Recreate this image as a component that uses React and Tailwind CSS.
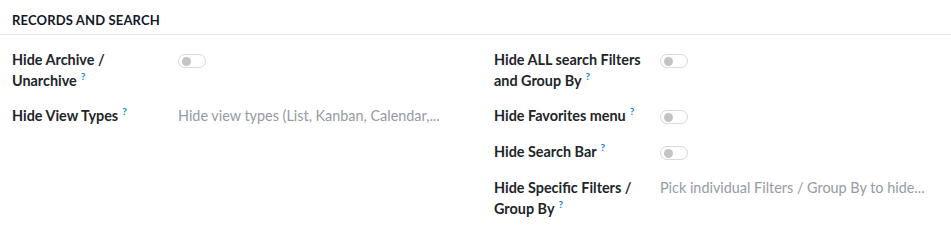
import React from "react";

function Help() {
  return (
    <span className="inline-block align-top ml-[4px] mt-[1px] text-[10px] leading-[10px] font-bold text-[#0b86c0]">?</span>
  );
}

function Toggle() {
  return (
    <div className="mt-[5px] w-[28px] h-[14px] rounded-full border border-[#d6d9dd] bg-white flex items-center pl-[3px] shrink-0">
      <div className="w-[9px] h-[9px] rounded-full bg-[#c2c4c7]" />
    </div>
  );
}

function Row({ label, help = true, children }) {
  return (
    <div className="flex">
      <div className="w-[152px] mr-[14px] font-bold text-[14.4px] leading-[21px] text-[#212529]">
        {label}
        {help && <Help />}
      </div>
      <div className="flex-1 min-w-0">{children}</div>
    </div>
  );
}

function Placeholder({ text }) {
  return (
    <div className="text-[14.4px] leading-[21px] text-[#959ba3] whitespace-nowrap overflow-hidden">{text}</div>
  );
}

export default function App() {
  return (
    <div className="w-[951px] h-[244px] bg-white font-['Lato',sans-serif]">
      <div className="h-[34px] flex items-end px-3 pb-[4px]">
        <div className="font-bold text-[13px] text-[#111827] tracking-[0.15px]">RECORDS AND SEARCH</div>
      </div>
      <div className="border-t border-[#e2e4e8]" />
      <div className="grid grid-cols-[482px_1fr] px-3 pt-[14px]">
        <div className="flex flex-col gap-[14px]">
          <Row label="Hide Archive / Unarchive">
            <Toggle />
          </Row>
          <Row label="Hide View Types">
            <Placeholder text="Hide view types (List, Kanban, Calendar,..." />
          </Row>
        </div>
        <div className="flex flex-col">
          <Row label="Hide ALL search Filters and Group By">
            <Toggle />
          </Row>
          <div className="mt-[14px]">
            <Row label="Hide Favorites menu">
              <Toggle />
            </Row>
          </div>
          <div className="mt-[15px]">
            <Row label="Hide Search Bar">
              <Toggle />
            </Row>
          </div>
          <div className="mt-[15px]">
            <Row label="Hide Specific Filters / Group By">
              <Placeholder text="Pick individual Filters / Group By to hide..." />
            </Row>
          </div>
        </div>
      </div>
    </div>
  );
}
